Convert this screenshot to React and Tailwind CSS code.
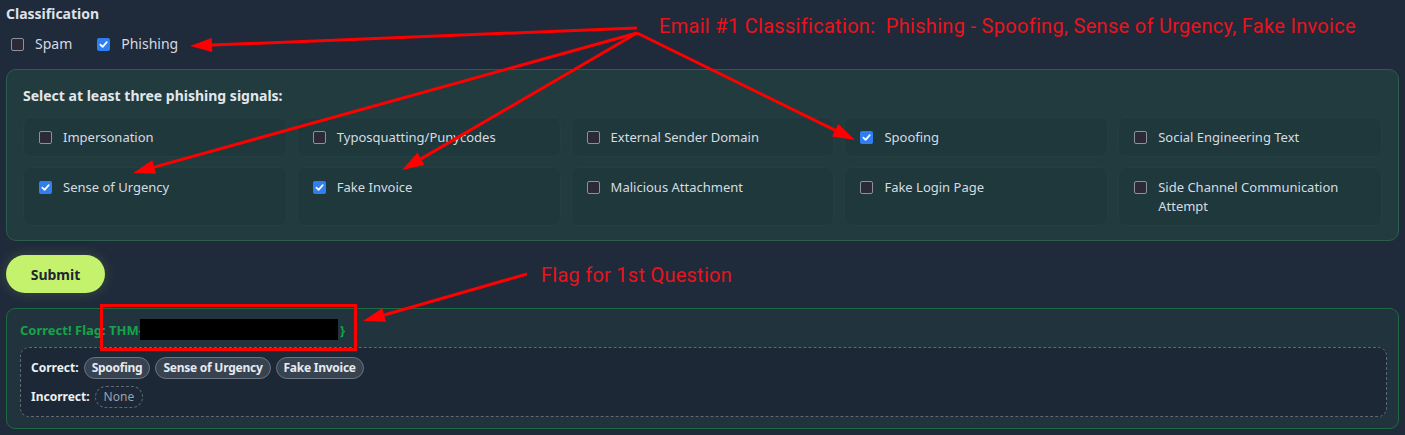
import React from 'react';

const signals = [
  { label: 'Impersonation', checked: false },
  { label: 'Typosquatting/Punycodes', checked: false },
  { label: 'External Sender Domain', checked: false },
  { label: 'Spoofing', checked: true },
  { label: 'Social Engineering Text', checked: false },
  { label: 'Sense of Urgency', checked: true },
  { label: 'Fake Invoice', checked: true },
  { label: 'Malicious Attachment', checked: false },
  { label: 'Fake Login Page', checked: false },
  { label: 'Side Channel Communication Attempt', checked: false },
];

const Box = ({ checked }) =>
  checked ? (
    <span className="flex h-[13px] w-[13px] shrink-0 items-center justify-center rounded-[2px] bg-[#2f7ff2]">
      <svg width="9" height="9" viewBox="0 0 10 10" fill="none">
        <path d="M1.5 5.2 L4 7.6 L8.6 2.4" stroke="white" strokeWidth="1.9" strokeLinecap="round" strokeLinejoin="round" />
      </svg>
    </span>
  ) : (
    <span className="block h-[13px] w-[13px] shrink-0 rounded-[2px] border border-[#8e909b] bg-[#2b2a36]" />
  );

const Tag = ({ children }) => (
  <span className="flex h-[22px] items-center rounded-full border border-[#6b7480] bg-[#384352] px-[7px] text-[12px] font-bold tracking-[-0.25px] text-[#e7eaee]">
    {children}
  </span>
);

// red annotation arrows drawn over the page
const Arrow = ({ x1, y1, x2, y2 }) => {
  const a = Math.atan2(y2 - y1, x2 - x1);
  const len = 22;
  const half = 7;
  const bx = x2 - len * Math.cos(a);
  const by = y2 - len * Math.sin(a);
  const px = -Math.sin(a) * half;
  const py = Math.cos(a) * half;
  return (
    <g>
      <line x1={x1} y1={y1} x2={bx} y2={by} stroke="#f00" strokeWidth="3" />
      <polygon points={`${x2},${y2} ${bx + px},${by + py} ${bx - px},${by - py}`} fill="#f00" />
    </g>
  );
};

export default function App() {
  return (
    <div className="relative min-h-screen bg-[#1f2a3b] px-[6px] pt-[4px] font-['Noto_Sans',sans-serif]">
      <h3 className="text-[14px] font-bold leading-5 text-[#dde2e8]">Classification</h3>
      <div className="mt-[10px] flex items-center pl-[5px] text-[14px] leading-5 text-[#d5dae0]">
        <label className="flex items-center gap-[11px]">
          <Box checked={false} />
          <span>Spam</span>
        </label>
        <label className="ml-[25px] flex items-center gap-[11px]">
          <Box checked />
          <span>Phishing</span>
        </label>
      </div>

      <div className="mt-[15px] rounded-[10px] border border-[#2b5e4c] bg-[#213b3f] px-[16px] pb-[14px] pt-[16px]">
        <h4 className="text-[14px] font-bold leading-5 text-[#e3e7eb]">Select at least three phishing signals:</h4>
        <div className="mt-[11px] grid grid-cols-5 gap-[10px]">
          {signals.map((s) => (
            <div key={s.label} className="flex items-start gap-[11px] rounded-[8px] border border-[#243f42] bg-[#1f383c] pb-[9px] pl-[15px] pr-[10px] pt-[10px] text-[13px] leading-[19px]">
              <span className="flex h-[19px] items-center">
                <Box checked={s.checked} />
              </span>
              <span className="text-[#d6dce1]">{s.label}</span>
            </div>
          ))}
        </div>
      </div>

      <button className="mt-[14px] flex h-[38px] w-[99px] items-center justify-center rounded-full bg-[#c5f26c] text-[14px] font-bold text-[#1d2634] shadow-[0_0_14px_rgba(190,242,100,0.18)]">
        Submit
      </button>

      <div className="mt-[15px] rounded-[9px] border border-[#1d6a42] bg-[#21333d] pb-[11px] pl-[13px] pr-[11px] pt-[10px]">
        <div className="flex items-center text-[13px] font-bold leading-5 text-[#16a34a]">
          <span>Correct! Flag: THM{'{'}</span>
          <span className="-ml-[4px] h-[21px] w-[198px] bg-black" />
          <span className="ml-[2px]">{'}'}</span>
        </div>
        <div className="mt-[7px] rounded-[9px] border border-dashed border-[#5f6873] bg-[#1c2835] pb-[8px] pl-[10px] pt-[9px]">
          <div className="flex items-center gap-[5px]">
            <span className="text-[12px] font-bold text-[#eef0f3]">Correct:</span>
            <Tag>Spoofing</Tag>
            <Tag>Sense of Urgency</Tag>
            <Tag>Fake Invoice</Tag>
          </div>
          <div className="mt-[7px] flex items-center gap-[5px]">
            <span className="text-[12px] font-bold text-[#eef0f3]">Incorrect:</span>
            <span className="flex h-[22px] items-center rounded-full border border-dashed border-[#5f6873] px-[8px] text-[12px] text-[#9aa1aa]">
              None
            </span>
          </div>
        </div>
      </div>

      {/* annotations */}
      <svg className="pointer-events-none absolute left-0 top-0" width="1405" height="435">
        <Arrow x1={637} y1={28} x2={190} y2={46} />
        <Arrow x1={637} y1={33} x2={133} y2={173} />
        <Arrow x1={637} y1={33} x2={402} y2={170} />
        <Arrow x1={637} y1={33} x2={855} y2={140} />
        <Arrow x1={527} y1={274} x2={363} y2={321} />
        <rect x="101.5" y="305.5" width="254" height="44" fill="none" stroke="#f00" strokeWidth="3" />
      </svg>
      <span className="absolute left-[659px] top-[14px] font-['Roboto',sans-serif] text-[20px] leading-6 tracking-[0.3px] text-[#e8141c]">
        Email #1 Classification:&nbsp; Phishing - Spoofing, Sense of Urgency, Fake Invoice
      </span>
      <span className="absolute left-[541px] top-[263px] font-['Roboto',sans-serif] text-[20px] leading-6 tracking-[0.25px] text-[#e8141c]">
        Flag for 1st Question
      </span>
    </div>
  );
}
